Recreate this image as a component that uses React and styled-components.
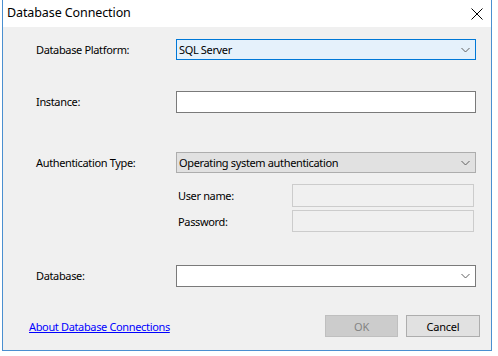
import React from "react";
import styled, { createGlobalStyle } from "styled-components";

const GlobalStyle = createGlobalStyle`
	html, body {
		margin: 0;
		padding: 0;
		background: #ffffff;
		font-family: "Noto Sans", "Open Sans", sans-serif;
	}
`;

const Window = styled.div`
	margin-left: 2px;
	width: 490px;
	height: 351px;
	box-sizing: border-box;
	border: 1px solid #4a8fd0;
	border-top: none;
	display: flex;
	flex-direction: column;
	background: #f0f0f0;
`;

const TitleBar = styled.div`
	height: 27px;
	background: #ffffff;
	display: flex;
	align-items: center;
	justify-content: space-between;
	padding: 0 5px 0 4px;
`;

const Title = styled.span`
	font-size: 12.5px;
	letter-spacing: -0.1px;
	color: #000;
	padding-bottom: 2px;
`;

const CloseBtn = styled.div`
	width: 14px;
	height: 14px;
	display: flex;
	align-items: center;
	justify-content: center;
	margin-right: 2px;
`;

const Body = styled.div`
	flex: 1;
	display: flex;
	flex-direction: column;
	padding: 0 0 0 33px;
	font-size: 11px;
	letter-spacing: -0.35px;
	color: #000;
`;

const Row = styled.div`
	display: flex;
	align-items: center;
	margin-top: ${(p) => p.top}px;
`;

const Label = styled.div`
	width: 140px;
	flex-shrink: 0;
	padding-bottom: 1px;
`;

const SubRow = styled.div`
	display: flex;
	align-items: center;
	margin-top: ${(p) => p.top}px;
	margin-left: 140px;
`;

const SubLabel = styled.div`
	width: 114px;
	padding-left: 2px;
`;

const Combo = styled.div`
	width: 300px;
	height: ${(p) => p.h || 21}px;
	box-sizing: border-box;
	display: flex;
	align-items: center;
	justify-content: space-between;
	padding: 0 5px 0 2px;
	background: ${(p) => (p.variant === "focus" ? "#e5f1fb" : p.variant === "edit" ? "#ffffff" : "#e1e1e1")};
	border: 1px solid ${(p) => (p.variant === "focus" ? "#0078d7" : p.variant === "edit" ? "#7a7a7a" : "#adadad")};
`;

const TextBox = styled.div`
	width: ${(p) => p.w}px;
	height: ${(p) => p.h}px;
	box-sizing: border-box;
	background: ${(p) => (p.disabled ? "#f0f0f0" : "#ffffff")};
	border: 1px solid ${(p) => (p.disabled ? "#cccccc" : "#7a7a7a")};
`;

const Footer = styled.div`
	display: flex;
	align-items: center;
	justify-content: space-between;
	margin-top: 28px;
	margin-left: -7px;
	padding-right: 11px;
`;

const AboutLink = styled.a`
	color: #0000ff;
	text-decoration: underline;
	cursor: pointer;
`;

const Buttons = styled.div`
	display: flex;
	gap: 8px;
`;

const Button = styled.button`
	width: ${(p) => p.w}px;
	height: 22px;
	box-sizing: border-box;
	font-family: inherit;
	font-size: 11px;
	letter-spacing: -0.2px;
	padding: 0;
	background: ${(p) => (p.disabled ? "#cccccc" : "#e1e1e1")};
	border: 1px solid ${(p) => (p.disabled ? "#bfbfbf" : "#adadad")};
	color: ${(p) => (p.disabled ? "#838383" : "#000")};
`;

const Chevron = () => (
	<svg width="9" height="6" viewBox="0 0 9 6">
		<polyline points="0.5,1 4.5,5 8.5,1" fill="none" stroke="#606060" strokeWidth="1" />
	</svg>
);

export default function App() {
	return (
		<>
			<GlobalStyle />
			<Window>
				<TitleBar>
					<Title>Database Connection</Title>
					<CloseBtn>
						<svg width="12" height="12" viewBox="0 0 12 12">
							<path d="M0.5 0.5 L11.5 11.5 M11.5 0.5 L0.5 11.5" stroke="#000" strokeWidth="1" />
						</svg>
					</CloseBtn>
				</TitleBar>
				<Body>
					<Row top={12}>
						<Label>Database Platform:</Label>
						<Combo variant="focus">
							<span>SQL Server</span>
							<Chevron />
						</Combo>
					</Row>
					<Row top={31}>
						<Label>Instance:</Label>
						<TextBox w={300} h={22} />
					</Row>
					<Row top={39}>
						<Label>Authentication Type:</Label>
						<Combo>
							<span>Operating system authentication</span>
							<Chevron />
						</Combo>
					</Row>
					<SubRow top={11}>
						<SubLabel>User name:</SubLabel>
						<TextBox w={182} h={23} disabled />
					</SubRow>
					<SubRow top={3}>
						<SubLabel>Password:</SubLabel>
						<TextBox w={182} h={22} disabled />
					</SubRow>
					<Row top={33}>
						<Label>Database:</Label>
						<Combo variant="edit" h={22}>
							<span />
							<Chevron />
						</Combo>
					</Row>
					<Footer>
						<AboutLink>About Database Connections</AboutLink>
						<Buttons>
							<Button w={73} disabled>OK</Button>
							<Button w={74}>Cancel</Button>
						</Buttons>
					</Footer>
				</Body>
			</Window>
		</>
	);
}
